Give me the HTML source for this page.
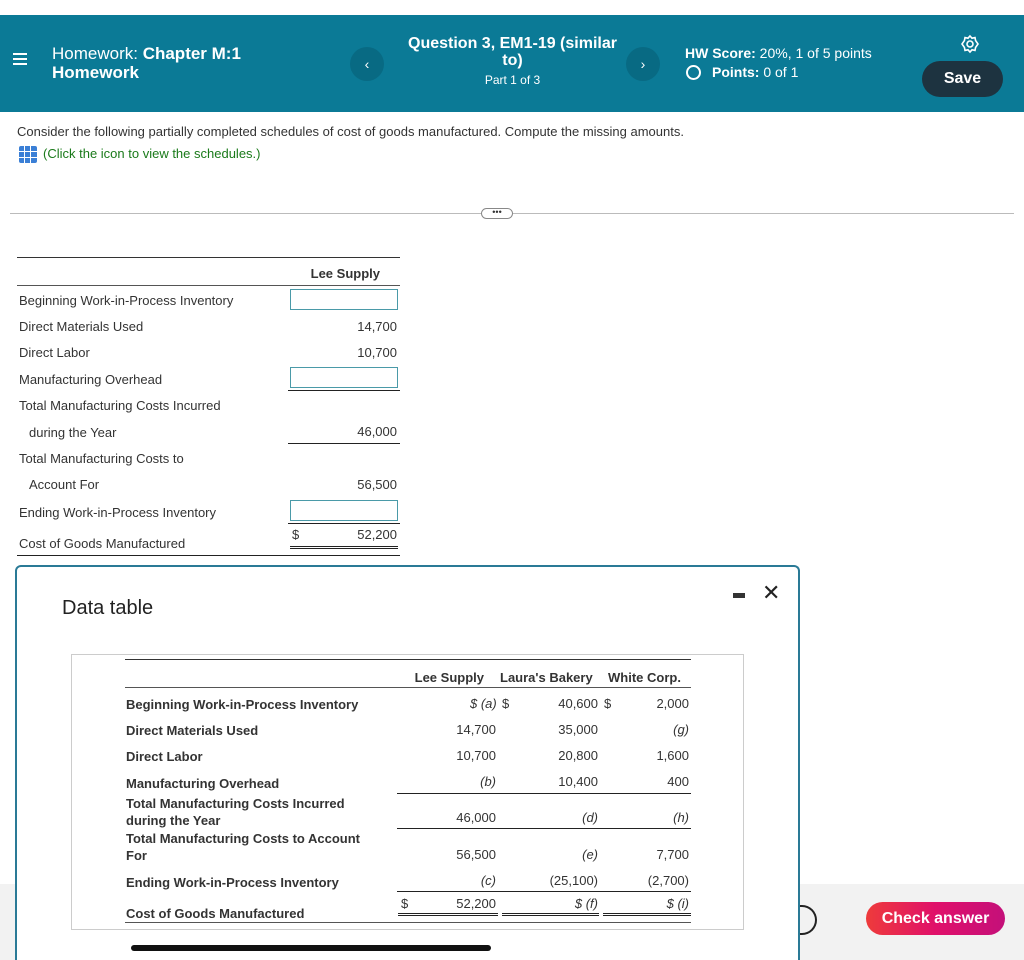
<!DOCTYPE html>
<html><head><meta charset="utf-8"><style>
*{margin:0;padding:0;box-sizing:border-box}
body{width:1024px;height:960px;position:relative;overflow:hidden;background:#fff;font-family:"Liberation Sans",Arial,sans-serif;color:#222}
.a{position:absolute;white-space:nowrap}
.hd{position:absolute;left:0;top:15px;width:1024px;height:97px;background:#0b7a96;color:#fff}
.circ{position:absolute;width:34px;height:34px;border-radius:50%;background:#086a83;color:#fff;font-size:14px;text-align:center;line-height:34px}
.t{font-size:13px;color:#333}
.r{text-align:right}
.box{position:absolute;left:290px;width:108px;height:21px;border:1.5px solid #4a9aa8;background:#fff}
.ln{position:absolute;height:0;border-top:1px solid #222}
.d{font-size:13px;color:#333}
.b{font-weight:bold}
.i{font-style:italic}
</style></head><body>
<div class="hd">
 <div class="a" style="left:13px;top:38px;width:14px;height:2px;background:#fff;box-shadow:0 5px 0 #fff,0 10px 0 #fff"></div>
 <div class="a" style="left:52px;top:29px;font-size:17px;line-height:19px">Homework: <b>Chapter M:1</b><br><b>Homework</b></div>
 <div class="circ" style="left:350px;top:32px">‹</div>
 <div class="a" style="left:390px;top:20px;width:245px;text-align:center;font-size:16px;font-weight:bold;line-height:17px">Question 3, EM1-19 (similar<br>to)</div>
 <div class="a" style="left:390px;top:58px;width:245px;text-align:center;font-size:12px">Part 1 of 3</div>
 <div class="circ" style="left:626px;top:32px">›</div>
 <div class="a" style="left:685px;top:30px;font-size:14px"><b>HW Score:</b> 20%, 1 of 5 points</div>
 <div class="a" style="left:686px;top:50px;width:15px;height:15px;border:2px solid #fff;border-radius:50%"></div>
 <div class="a" style="left:712px;top:49px;font-size:14px"><b>Points:</b> 0 of 1</div>
 <svg class="a" style="left:960px;top:19px" width="20" height="20" viewBox="0 0 20 20"><circle cx="10" cy="10" r="3" fill="none" stroke="#fff" stroke-width="1.6"/><path d="M10 2l2 2.2 3-.6.6 3L18 10l-2.4 3.4-.6 3-3-.6L10 18l-2-2.2-3 .6-.6-3L2 10l2.4-3.4.6-3 3 .6z" fill="none" stroke="#fff" stroke-width="1.6"/></svg>
 <div class="a" style="left:922px;top:46px;width:81px;height:36px;border-radius:18px;background:#1d3340;color:#fff;font-weight:bold;font-size:16px;text-align:center;line-height:36px">Save</div>
</div>
<div class="a t" style="left:17px;top:124px">Consider the following partially completed schedules of cost of goods manufactured. Compute the missing amounts.</div>
<div class="a" style="left:19px;top:146px;width:18px;height:17px;background:#3a7fd6;border-radius:2px;background-image:linear-gradient(90deg,transparent 5px,#fff 5px,#fff 6px,transparent 6px,transparent 11px,#fff 11px,#fff 12px,transparent 12px),linear-gradient(transparent 5px,#fff 5px,#fff 6px,transparent 6px,transparent 11px,#fff 11px,#fff 12px,transparent 12px)"></div>
<div class="a" style="left:43px;top:146px;font-size:13px;color:#1a7a1a">(Click the icon to view the schedules.)</div>
<div class="ln" style="left:10px;top:213px;width:1004px;border-color:#bbb"></div>
<div class="a" style="left:481px;top:208px;width:32px;height:11px;border:1px solid #888;border-radius:6px;background:#fff;font-size:9px;line-height:6px;text-align:center;color:#333">•••</div>

<div class="ln" style="left:17px;top:257px;width:383px;border-top:1.5px solid #333"></div>
<div class="a t b" style="left:290px;top:266px;width:90px;text-align:right">Lee Supply</div>
<div class="ln" style="left:17px;top:285px;width:383px;border-top:1.5px solid #555"></div>
<div class="a t" style="left:19px;top:293px">Beginning Work-in-Process Inventory</div>
<div class="box" style="top:289px"></div>
<div class="a t" style="left:19px;top:319px">Direct Materials Used</div><div class="a t r" style="left:300px;top:319px;width:97px">14,700</div>
<div class="a t" style="left:19px;top:345px">Direct Labor</div><div class="a t r" style="left:300px;top:345px;width:97px">10,700</div>
<div class="a t" style="left:19px;top:372px">Manufacturing Overhead</div><div class="box" style="top:367px"></div>
<div class="ln" style="left:288px;top:390px;width:112px"></div>
<div class="a t" style="left:19px;top:398px">Total Manufacturing Costs Incurred</div>
<div class="a t" style="left:29px;top:425px">during the Year</div><div class="a t r" style="left:300px;top:424px;width:97px">46,000</div>
<div class="ln" style="left:288px;top:443px;width:112px"></div>
<div class="a t" style="left:19px;top:451px">Total Manufacturing Costs to</div>
<div class="a t" style="left:29px;top:477px">Account For</div><div class="a t r" style="left:300px;top:477px;width:97px">56,500</div>
<div class="a t" style="left:19px;top:505px">Ending Work-in-Process Inventory</div><div class="box" style="top:500px"></div>
<div class="ln" style="left:288px;top:523px;width:112px"></div>
<div class="a t" style="left:292px;top:527px">$</div><div class="a t r" style="left:300px;top:527px;width:97px">52,200</div>
<div class="ln" style="left:290px;top:546px;width:108px;border-top:3px double #222;height:4px"></div>
<div class="a t" style="left:19px;top:536px">Cost of Goods Manufactured</div>
<div class="ln" style="left:17px;top:555px;width:383px"></div>

<div class="a" style="left:0;top:884px;width:1024px;height:76px;background:#f2f2f2"></div>
<div class="a" style="left:795px;top:905px;width:22px;height:30px;border:2px solid #222;border-left:none;border-radius:0 15px 15px 0"></div>
<div class="a" style="left:866px;top:902px;width:139px;height:33px;border-radius:17px;background:linear-gradient(90deg,#ee3b3b,#e0106a,#c4107a);color:#fff;font-weight:bold;font-size:16px;text-align:center;line-height:33px">Check answer</div>

<div class="a" style="left:15px;top:565px;width:785px;height:395px;border:2.5px solid #2a7a96;border-bottom:none;border-radius:6px 6px 0 0;background:#fff"></div>
<div class="a" style="left:62px;top:597px;font-size:20px;color:#222">Data table</div>
<div class="a" style="left:733px;top:593px;width:12px;height:5px;background:#333"></div>
<div class="a" style="left:762px;top:580px;font-size:22px;color:#222">✕</div>
<div class="a" style="left:71px;top:654px;width:673px;height:276px;border:1px solid #ccc"></div>
<div class="ln" style="left:125px;top:659px;width:566px;border-top:1.5px solid #333"></div>
<div class="a d b" style="left:400px;top:670px;width:84px;text-align:right">Lee Supply</div>
<div class="a d b" style="left:500px;top:670px">Laura's Bakery</div>
<div class="a d b" style="left:608px;top:670px">White Corp.</div>
<div class="ln" style="left:125px;top:687px;width:566px;border-top:1.5px solid #555"></div>
<div class="a d b" style="left:126px;top:697px">Beginning Work-in-Process Inventory</div>
<div class="a d i" style="left:470px;top:696px">$ (a)</div><div class="a d" style="left:502px;top:696px">$</div>
<div class="a d r" style="left:540px;top:696px;width:58px">40,600</div><div class="a d" style="left:604px;top:696px">$</div>
<div class="a d r" style="left:630px;top:696px;width:59px">2,000</div>
<div class="a d b" style="left:126px;top:723px">Direct Materials Used</div>
<div class="a d r" style="left:430px;top:722px;width:66px">14,700</div><div class="a d r" style="left:540px;top:722px;width:58px">35,000</div><div class="a d r i" style="left:630px;top:722px;width:59px">(g)</div>
<div class="a d b" style="left:126px;top:749px">Direct Labor</div>
<div class="a d r" style="left:430px;top:748px;width:66px">10,700</div><div class="a d r" style="left:540px;top:748px;width:58px">20,800</div><div class="a d r" style="left:630px;top:748px;width:59px">1,600</div>
<div class="a d b" style="left:126px;top:776px">Manufacturing Overhead</div>
<div class="a d r i" style="left:430px;top:774px;width:66px">(b)</div><div class="a d r" style="left:540px;top:774px;width:58px">10,400</div><div class="a d r" style="left:630px;top:774px;width:59px">400</div>
<div class="ln" style="left:397px;top:793px;width:294px"></div>
<div class="a d b" style="left:126px;top:795px;line-height:17px">Total Manufacturing Costs Incurred<br>during the Year</div>
<div class="a d r" style="left:430px;top:810px;width:66px">46,000</div><div class="a d r i" style="left:540px;top:810px;width:58px">(d)</div><div class="a d r i" style="left:630px;top:810px;width:59px">(h)</div>
<div class="ln" style="left:397px;top:828px;width:294px"></div>
<div class="a d b" style="left:126px;top:830px;line-height:17px">Total Manufacturing Costs to Account<br>For</div>
<div class="a d r" style="left:430px;top:847px;width:66px">56,500</div><div class="a d r i" style="left:540px;top:847px;width:58px">(e)</div><div class="a d r" style="left:630px;top:847px;width:59px">7,700</div>
<div class="a d b" style="left:126px;top:875px">Ending Work-in-Process Inventory</div>
<div class="a d r i" style="left:430px;top:873px;width:66px">(c)</div><div class="a d r" style="left:530px;top:873px;width:68px">(25,100)</div><div class="a d r" style="left:620px;top:873px;width:69px">(2,700)</div>
<div class="ln" style="left:397px;top:891px;width:294px"></div>
<div class="a d" style="left:401px;top:896px">$</div>
<div class="a d r" style="left:430px;top:896px;width:66px">52,200</div><div class="a d r i" style="left:540px;top:896px;width:58px">$ (f)</div><div class="a d r i" style="left:630px;top:896px;width:59px">$ (i)</div>
<div class="ln" style="left:398px;top:913px;width:100px;border-top:3px double #222;height:4px"></div>
<div class="ln" style="left:502px;top:913px;width:97px;border-top:3px double #222;height:4px"></div>
<div class="ln" style="left:603px;top:913px;width:88px;border-top:3px double #222;height:4px"></div>
<div class="a d b" style="left:126px;top:906px">Cost of Goods Manufactured</div>
<div class="ln" style="left:125px;top:922px;width:566px;border-top:1.5px solid #555"></div>
<div class="a" style="left:131px;top:945px;width:360px;height:6px;border-radius:3px;background:#111"></div>
</body></html>
